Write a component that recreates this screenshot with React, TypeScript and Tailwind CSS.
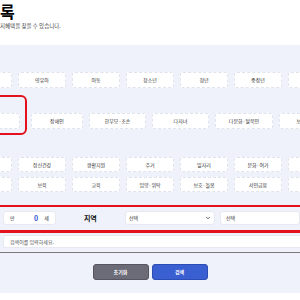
import { ChevronDown } from "lucide-react";

// edge chips are cut off by the viewport, their labels fall outside it
const rowA = ["", "영유아", "아동", "청소년", "청년", "중장년", ""];
const rowC = ["", "정신건강", "생활지원", "주거", "일자리", "문화·여가", ""];
const rowD = ["", "보육", "교육", "입양·위탁", "보호·돌봄", "서민금융", ""];

const rowB = [
  { label: "", w: "w-[51px] mr-[5px]" },
  { label: "장애인", w: "w-[52px]" },
  { label: "한부모·조손", w: "w-[57px]" },
  { label: "다자녀", w: "w-[57px]" },
  { label: "다문화·탈북민", w: "w-[58px]" },
  { label: "보훈대상자", w: "w-[58px]" },
];

function Chip({ label, className = "" }: { label: string; className?: string }) {
  return (
    <div
      className={`shrink-0 flex items-center justify-center bg-white border border-dashed border-[#dfe3ec] rounded-[3px] text-[5px] text-[#333] whitespace-nowrap ${className}`}
    >
      {label}
    </div>
  );
}

function ChipRow({ items, h }: { items: string[]; h: string }) {
  return (
    <div className="flex gap-[6px] -ml-[36px]">
      {items.map((it, i) => (
        <Chip key={i} label={it} className={`w-[48px] ${h}`} />
      ))}
    </div>
  );
}

export default function App() {
  return (
    <div
      className="w-[300px] h-[300px] overflow-hidden bg-white"
      style={{ fontFamily: '"Noto Sans CJK KR", "Noto Sans", sans-serif' }}
    >
      {/* header */}
      <div className="h-[45px] pt-[1px]">
        <h1 className="text-[16px] font-bold leading-[20px] text-black">록</h1>
        <p className="text-[5.5px] leading-[8px] text-[#444] mt-[1px]">지혜택을 찾을 수 있습니다.</p>
      </div>

      {/* filter panel */}
      <div className="bg-[#eff2fa] h-[248px] pt-[27px]">
        <ChipRow items={rowA} h="h-[16px]" />

        <div className="relative mt-[25px]">
          <div className="flex gap-[6px] -ml-[31px]">
            {rowB.map((b, i) => (
              <Chip key={i} label={b.label} className={`h-[16px] ${b.w}`} />
            ))}
          </div>
          {/* annotation box */}
          <div className="absolute -left-[20px] top-[-18px] w-[47px] h-[40px] border-2 border-[#e3111b] rounded-[6px]" />
        </div>

        <div className="mt-[28px] flex flex-col gap-[5px]">
          <ChipRow items={rowC} h="h-[15px]" />
          <ChipRow items={rowD} h="h-[15px]" />
        </div>

        {/* age / region, highlighted */}
        <div className="mt-[13px] border-t-2 border-b-[3px] border-[#e3111b] pt-[4px] pb-[5px]">
          <div className="flex items-center h-[14px]">
            <div className="ml-[3px] w-[57px] h-full bg-white rounded-[3px] border border-[#e6e9f0] flex items-center text-[5px] text-[#333]">
              <span className="ml-[6px]">만</span>
              <span className="ml-auto text-[7px] font-bold text-[#2f54d6]">0</span>
              <span className="ml-[6px] mr-[6px]">세</span>
            </div>
            <div className="w-[75px] flex justify-center text-[7px] font-bold text-[#111]">지역</div>
            <div className="w-[97px] h-full bg-white rounded-[3px] border border-[#e6e9f0] flex items-center px-[3px] text-[5px] text-[#333]">
              <span>선택</span>
              <ChevronDown className="ml-auto size-[6px] text-[#333]" strokeWidth={3} />
            </div>
            <div className="ml-[5px] w-[80px] h-full bg-white rounded-[3px] border border-[#e6e9f0] flex items-center px-[5px] text-[5px] text-[#333] shrink-0">
              <span>선택</span>
            </div>
          </div>
        </div>

        <div className="mt-[2px] ml-[3px] w-[310px] h-[13px] bg-white rounded-[3px] border border-[#e6e9f0] flex items-center px-[6px] text-[5px] text-[#555]">
          검색어를 입력하세요.
        </div>

        <div className="mt-[4px] h-px bg-[#7a7a7a]" />

        <div className="mt-[11px] flex justify-center gap-[3px]">
          <button className="w-[56px] h-[16px] rounded-[3px] bg-[#6c6b78] border border-[#55545f] text-white text-[5px] font-bold">
            초기화
          </button>
          <button className="w-[56px] h-[16px] rounded-[3px] bg-[#3a5fd0] border border-[#2c4db5] text-white text-[5px] font-bold">
            검색
          </button>
        </div>
      </div>
    </div>
  );
}
